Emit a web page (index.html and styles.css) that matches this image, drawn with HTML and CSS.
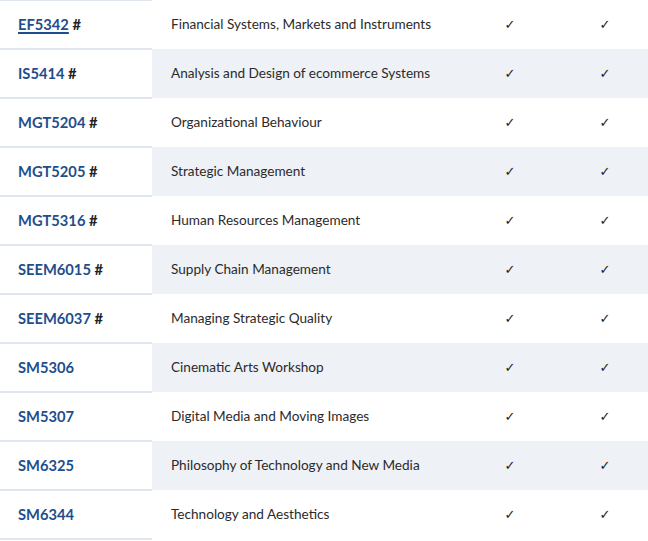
FILE: index.html
```html
<!DOCTYPE html>
<html>
<head>
<meta charset="utf-8">
<link rel="stylesheet" href="styles.css">
</head>
<body>
<table class="courses">
  <tbody>
    <tr><td class="code"><a class="link underline" href="#">EF5342</a> <span class="hash">#</span></td><td class="title">Financial Systems, Markets and Instruments</td><td class="check">✓</td><td class="check">✓</td></tr>
    <tr><td class="code"><a class="link" href="#">IS5414</a> <span class="hash">#</span></td><td class="title">Analysis and Design of ecommerce Systems</td><td class="check">✓</td><td class="check">✓</td></tr>
    <tr><td class="code"><a class="link" href="#">MGT5204</a> <span class="hash">#</span></td><td class="title">Organizational Behaviour</td><td class="check">✓</td><td class="check">✓</td></tr>
    <tr><td class="code"><a class="link" href="#">MGT5205</a> <span class="hash">#</span></td><td class="title">Strategic Management</td><td class="check">✓</td><td class="check">✓</td></tr>
    <tr><td class="code"><a class="link" href="#">MGT5316</a> <span class="hash">#</span></td><td class="title">Human Resources Management</td><td class="check">✓</td><td class="check">✓</td></tr>
    <tr><td class="code"><a class="link" href="#">SEEM6015</a> <span class="hash">#</span></td><td class="title">Supply Chain Management</td><td class="check">✓</td><td class="check">✓</td></tr>
    <tr><td class="code"><a class="link" href="#">SEEM6037</a> <span class="hash">#</span></td><td class="title">Managing Strategic Quality</td><td class="check">✓</td><td class="check">✓</td></tr>
    <tr><td class="code"><a class="link" href="#">SM5306</a></td><td class="title">Cinematic Arts Workshop</td><td class="check">✓</td><td class="check">✓</td></tr>
    <tr><td class="code"><a class="link" href="#">SM5307</a></td><td class="title">Digital Media and Moving Images</td><td class="check">✓</td><td class="check">✓</td></tr>
    <tr><td class="code"><a class="link" href="#">SM6325</a></td><td class="title">Philosophy of Technology and New Media</td><td class="check">✓</td><td class="check">✓</td></tr>
    <tr><td class="code"><a class="link" href="#">SM6344</a></td><td class="title">Technology and Aesthetics</td><td class="check">✓</td><td class="check">✓</td></tr>
  </tbody>
</table>
</body>
</html>
```
FILE: styles.css
```css
html, body {
  margin: 0;
  padding: 0;
  background: #ffffff;
  overflow: hidden;
}
body {
  font-family: Lato, "Open Sans", sans-serif;
}
.courses {
  border-collapse: collapse;
  table-layout: fixed;
  width: 652px;
  margin-top: -1px;
}
.courses td {
  height: 49px;
  box-sizing: border-box;
  padding: 0 0 2px 0;
  vertical-align: middle;
}
.courses tr:nth-child(even) td {
  background: #eef1f6;
}
.courses tr td.code {
  background: #ffffff;
  width: 152px;
  padding-left: 18px;
  border-top: 2px solid #dfe6f0;
  border-bottom: 2px solid #dfe6f0;
  font-size: 14.7px;
  font-weight: 700;
}
.link {
  color: #1e4e8c;
  text-decoration: none;
}
.link.underline {
  text-decoration: underline;
  text-decoration-thickness: 1.5px;
  text-underline-offset: 2px;
}
.hash {
  color: #222;
}
.title {
  width: 310px;
  padding-left: 19px !important;
  font-size: 13.6px;
  color: #2b2b2b;
}
.courses td.check {
  width: 96px;
  padding-bottom: 0;
  text-align: center;
  font-size: 13px;
  color: #222;
  font-family: "DejaVu Sans", sans-serif;
}
.courses td.check:last-child {
  width: 94px;
}
```
